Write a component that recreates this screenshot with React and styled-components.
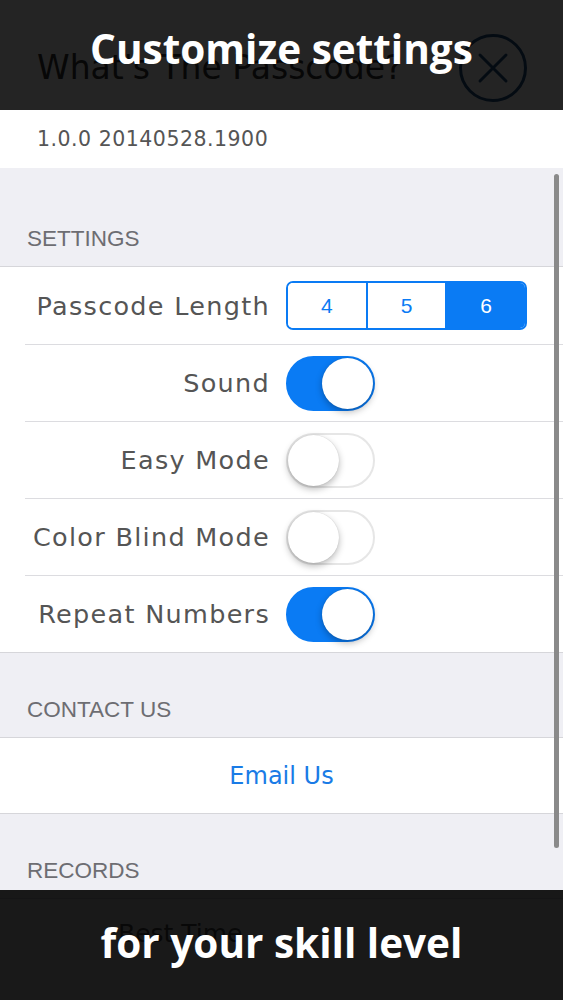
import styled, { createGlobalStyle } from 'styled-components';

const GlobalStyle = createGlobalStyle`
  html, body {
    margin: 0;
    padding: 0;
    background: #efeff4;
  }
  * { box-sizing: border-box; }
`;

const Screen = styled.div`
  position: relative;
  width: 563px;
  height: 1000px;
  overflow: hidden;
  background: #efeff4;
  font-family: "DejaVu Sans", Lato, sans-serif;
  color: #555555;
`;

const Header = styled.div`
  background: #ffffff;
  padding: 0 0 0 37px;
`;

const TitleBar = styled.div`
  height: 110px;
  display: flex;
  align-items: center;
  justify-content: space-between;
  padding-right: 36px;
`;

const Title = styled.h1`
  margin: 0;
  padding-top: 24px;
  font-size: 33px;
  font-weight: 400;
  color: #333333;
`;

const CloseButton = styled.div`
  width: 68px;
  height: 68px;
  margin-top: 26px;
  border: 3px solid #1f4d80;
  border-radius: 50%;
  display: flex;
  align-items: center;
  justify-content: center;
`;

const Version = styled.div`
  height: 58px;
  display: flex;
  align-items: center;
  font-size: 20.5px;
  letter-spacing: 0.5px;
  color: #555555;
`;

const SectionHeader = styled.div`
  height: ${p => p.$h}px;
  display: flex;
  align-items: flex-end;
  padding: 0 0 14px 27px;
  font-family: "Liberation Sans", Arial, sans-serif;
  font-size: 22.5px;
  color: #6d6d72;
  text-transform: uppercase;
`;

const Group = styled.div`
  background: #ffffff;
  border-top: 1px solid #d6d6da;
  border-bottom: 1px solid #d6d6da;
`;

const Row = styled.div`
  height: 77px;
  margin-left: 25px;
  display: grid;
  grid-template-columns: 245px auto;
  column-gap: 16px;
  align-items: center;
  border-top: ${p => (p.$first ? 'none' : '1px solid #dcdce0')};
`;

const Label = styled.div`
  text-align: right;
  font-size: 25.5px;
  letter-spacing: 1.3px;
  color: #555555;
  white-space: nowrap;
`;

const Segmented = styled.div`
  display: flex;
  width: 241px;
  height: 49px;
  border: 2px solid #0a7bf4;
  border-radius: 7px;
  overflow: hidden;
`;

const Segment = styled.div`
  flex: 1;
  display: flex;
  align-items: center;
  justify-content: center;
  font-family: "Liberation Sans", Arial, sans-serif;
  font-size: 21px;
  color: ${p => (p.$active ? '#ffffff' : '#0a7bf4')};
  background: ${p => (p.$active ? '#0a7bf4' : '#ffffff')};
  & + & {
    border-left: 2px solid #0a7bf4;
  }
`;

const Switch = styled.div`
  position: relative;
  width: 89px;
  height: 55px;
  border-radius: 28px;
  background: ${p => (p.$on ? '#0a7bf4' : '#ffffff')};
  border: 2px solid ${p => (p.$on ? '#0a7bf4' : '#e6e6e6')};
`;

const Knob = styled.div`
  position: absolute;
  top: 0;
  left: ${p => (p.$on ? '34px' : '0')};
  width: 51px;
  height: 51px;
  border-radius: 50%;
  background: #ffffff;
  box-shadow: 0 3px 7px rgba(0, 0, 0, 0.28), 0 0 1px rgba(0, 0, 0, 0.2);
`;

const LinkRow = styled.div`
  height: 75px;
  display: flex;
  align-items: center;
  justify-content: center;
  font-size: 24px;
  color: #1a7be6;
`;

const PlainRow = styled.div`
  height: 110px;
  padding: 20px 0 0 118px;
  font-size: 25px;
  color: #555555;
`;

const Scrollbar = styled.div`
  position: absolute;
  right: 4px;
  top: 174px;
  width: 5px;
  height: 674px;
  border-radius: 3px;
  background: #8a8a8a;
`;

const Banner = styled.div`
  position: absolute;
  left: 0;
  right: 0;
  height: 110px;
  ${p => (p.$bottom ? 'bottom: 0; background: rgba(0,0,0,0.9);' : 'top: 0; background: rgba(0,0,0,0.86);')}
  display: flex;
  justify-content: center;
  padding-top: ${p => (p.$bottom ? '28px' : '24px')};
  font-family: "Open Sans", Roboto, sans-serif;
  font-weight: 700;
  font-size: 40.5px;
  line-height: 50px;
  color: #ffffff;
`;

function Toggle({ on }) {
  return (
    <Switch $on={on}>
      <Knob $on={on} />
    </Switch>
  );
}

const toggles = [
  { label: 'Sound', on: true },
  { label: 'Easy Mode', on: false },
  { label: 'Color Blind Mode', on: false },
  { label: 'Repeat Numbers', on: true },
];

export default function App() {
  return (
    <Screen>
      <GlobalStyle />
      <Header>
        <TitleBar>
          <Title>What's The Passcode?</Title>
          <CloseButton>
            <svg width="34" height="34" viewBox="0 0 34 34">
              <path d="M4 4 L30 30 M30 4 L4 30" stroke="#1f4d80" strokeWidth="3" strokeLinecap="round" />
            </svg>
          </CloseButton>
        </TitleBar>
        <Version>1.0.0 20140528.1900</Version>
      </Header>

      <SectionHeader $h={98}>Settings</SectionHeader>
      <Group>
        <Row $first>
          <Label>Passcode Length</Label>
          <Segmented>
            <Segment>4</Segment>
            <Segment>5</Segment>
            <Segment $active>6</Segment>
          </Segmented>
        </Row>
        {toggles.map(t => (
          <Row key={t.label}>
            <Label>{t.label}</Label>
            <Toggle on={t.on} />
          </Row>
        ))}
      </Group>

      <SectionHeader $h={84}>Contact Us</SectionHeader>
      <Group>
        <LinkRow>Email Us</LinkRow>
      </Group>

      <SectionHeader $h={84}>Records</SectionHeader>
      <Group>
        <PlainRow>Best Time</PlainRow>
      </Group>

      <Scrollbar />

      <Banner>Customize settings</Banner>
      <Banner $bottom>for your skill level</Banner>
    </Screen>
  );
}
